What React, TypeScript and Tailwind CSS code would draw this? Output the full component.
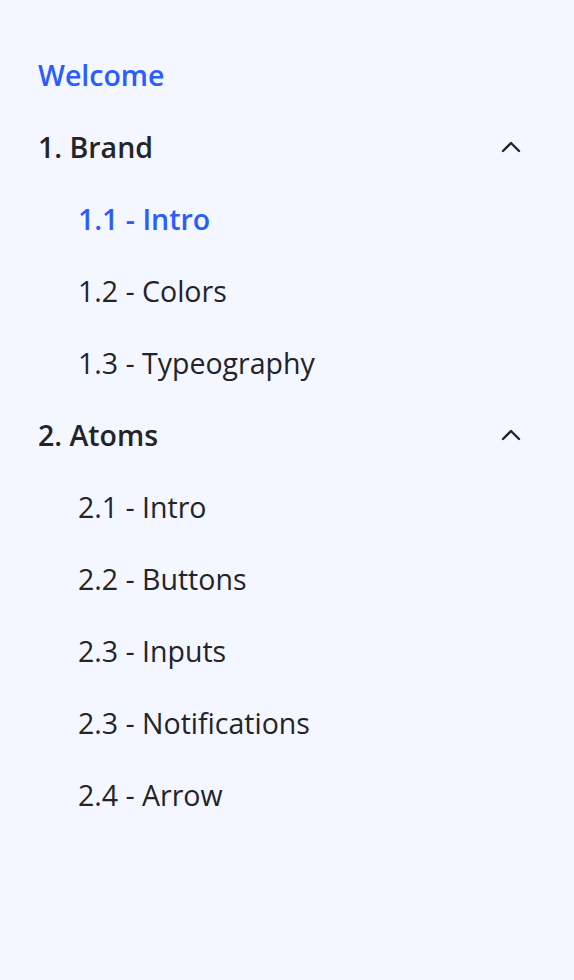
import React from 'react';

const Chevron = () => (
  <svg width="22" height="14" viewBox="0 0 22 14" fill="none" stroke="#23232b" strokeWidth="2.4" strokeLinecap="round" strokeLinejoin="round">
    <path d="M3 11 L11 3 L19 11" />
  </svg>
);

const sections = [
  { title: '1. Brand', items: ['1.1 - Intro', '1.2 - Colors', '1.3 - Typeography'], active: 0 },
  { title: '2. Atoms', items: ['2.1 - Intro', '2.2 - Buttons', '2.3 - Inputs', '2.3 - Notifications', '2.4 - Arrow'], active: -1 },
];

export default function App() {
  return (
    <div className="min-h-[980px] w-full bg-[#f4f7ff] pt-[39px] pl-[38px] pr-[52px]" style={{ fontFamily: '"Source Sans Pro", "Open Sans", sans-serif' }}>
      <div className="h-[72px] flex items-center text-[28.5px] font-semibold text-[#2b5cff]">Welcome</div>
      {sections.map((s) => (
        <div key={s.title}>
          <div className="h-[72px] flex items-center justify-between text-[28.5px] font-semibold text-[#23232b]">
            <span>{s.title}</span>
            <Chevron />
          </div>
          {s.items.map((item, i) => (
            <div
              key={item}
              className={`h-[72px] flex items-center pl-[40px] text-[28.5px] ${i === s.active ? 'font-semibold text-[#2b5cff]' : 'text-[#23232b]'}`}
            >
              {item}
            </div>
          ))}
        </div>
      ))}
    </div>
  );
}
